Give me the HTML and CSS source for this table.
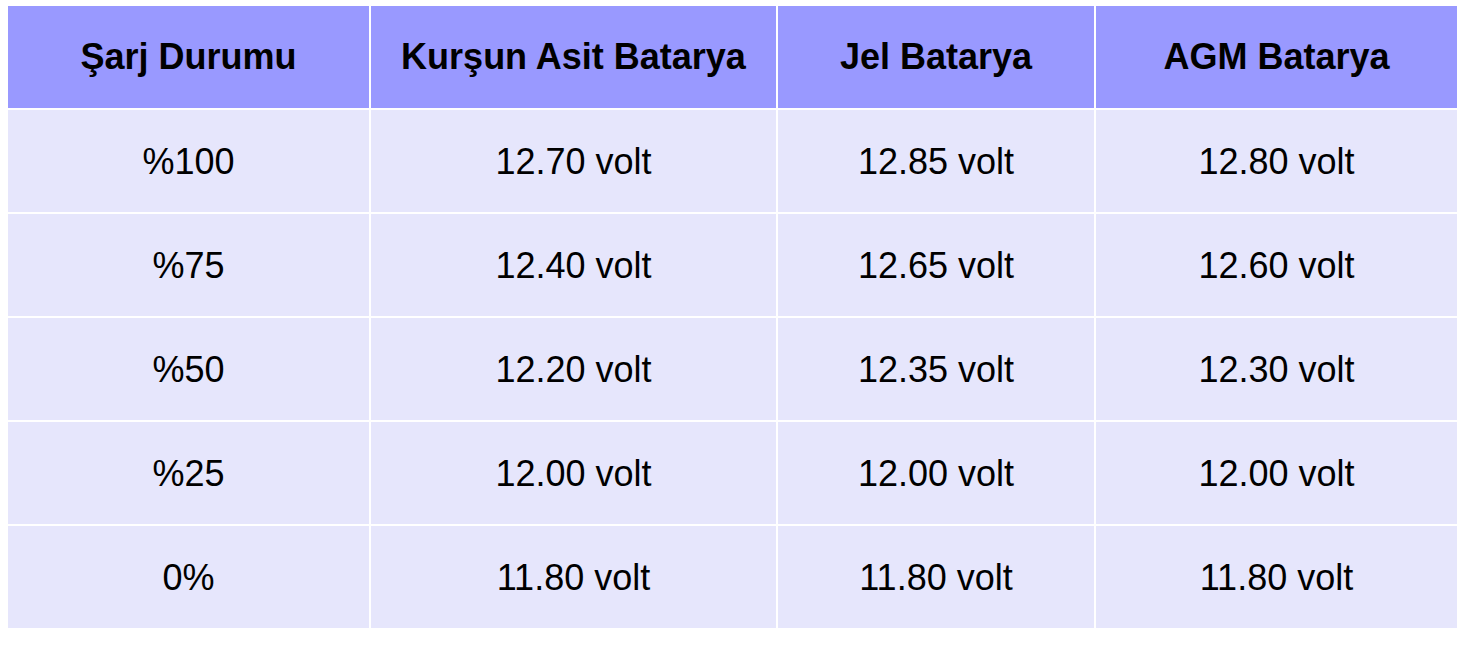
FILE: index.html
```html
<!DOCTYPE html>
<html lang="tr">
<head>
<meta charset="utf-8">
<link rel="stylesheet" href="styles.css">
</head>
<body>
<div class="table">
  <div class="cell head">Şarj Durumu</div>
  <div class="cell head">Kurşun Asit Batarya</div>
  <div class="cell head">Jel Batarya</div>
  <div class="cell head">AGM Batarya</div>

  <div class="cell">%100</div>
  <div class="cell">12.70 volt</div>
  <div class="cell">12.85 volt</div>
  <div class="cell">12.80 volt</div>

  <div class="cell">%75</div>
  <div class="cell">12.40 volt</div>
  <div class="cell">12.65 volt</div>
  <div class="cell">12.60 volt</div>

  <div class="cell">%50</div>
  <div class="cell">12.20 volt</div>
  <div class="cell">12.35 volt</div>
  <div class="cell">12.30 volt</div>

  <div class="cell">%25</div>
  <div class="cell">12.00 volt</div>
  <div class="cell">12.00 volt</div>
  <div class="cell">12.00 volt</div>

  <div class="cell">0%</div>
  <div class="cell">11.80 volt</div>
  <div class="cell">11.80 volt</div>
  <div class="cell">11.80 volt</div>
</div>
</body>
</html>
```

FILE: styles.css
```css
html, body {
  margin: 0;
  padding: 0;
  background: #ffffff;
}
body {
  padding: 6px 8px 0 8px;
  font-family: "Liberation Sans", Arial, sans-serif;
  color: #000000;
}
.table {
  display: grid;
  grid-template-columns: 361px 405px 316px 361px;
  grid-template-rows: 102px repeat(5, 102px);
  gap: 2px;
  width: 1449px;
}
.cell {
  display: flex;
  align-items: center;
  justify-content: center;
  background: #e6e6fc;
  font-size: 36px;
  line-height: 1;
  padding-top: 1px;
}
.cell.head {
  background: #9999ff;
  font-weight: bold;
  padding-top: 0;
}
```
